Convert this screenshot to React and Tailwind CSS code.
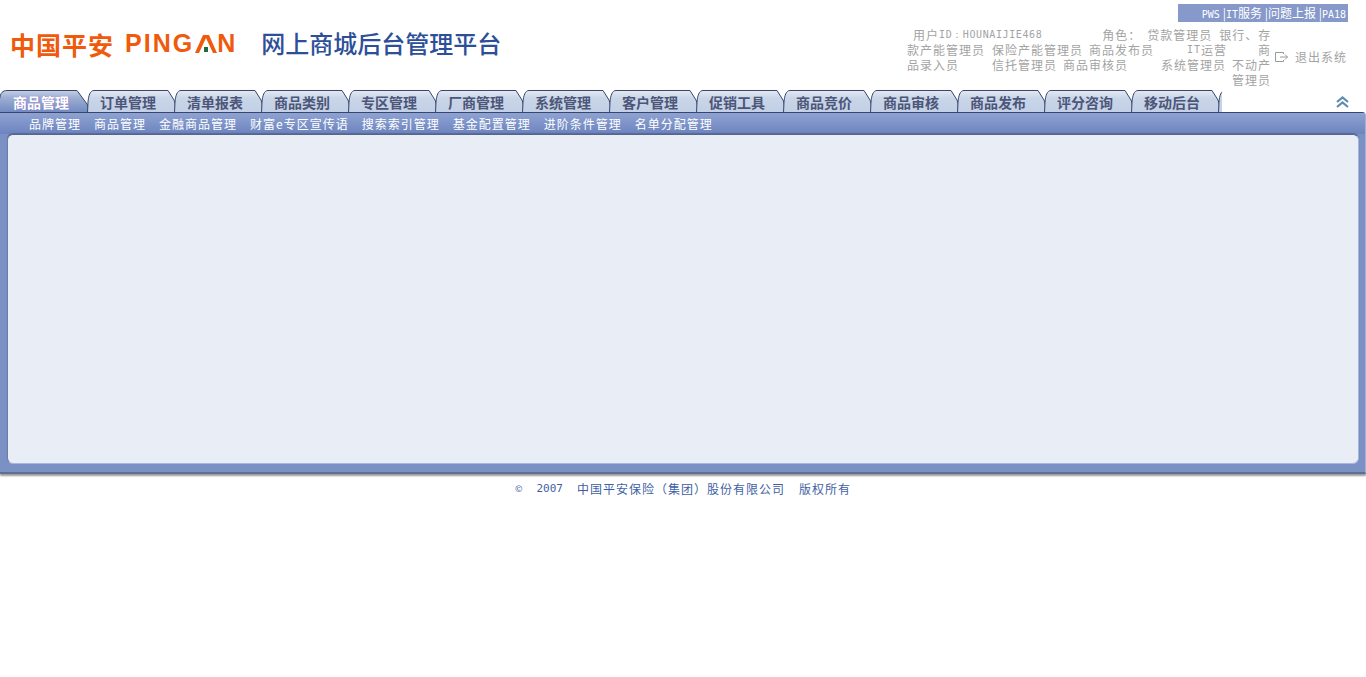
import React from "react";

const tabs = ["订单管理", "清单报表", "商品类别", "专区管理", "厂商管理", "系统管理", "客户管理", "促销工具", "商品竞价", "商品审核", "商品发布", "评分咨询", "移动后台"];
const subItems = ["品牌管理", "商品管理", "金融商品管理", "财富e专区宣传语", "搜索索引管理", "基金配置管理", "进阶条件管理", "名单分配管理"];

const cjk = "font-['Noto_Sans_CJK_SC','Liberation_Sans',sans-serif]";
const mono = "font-['DejaVu_Sans_Mono',monospace]";

// tab outline, drawn over a 90x22 box
const TabShape = () => (
  <svg className="absolute left-[-1px] top-0" width="91" height="23" viewBox="0 0 91 23">
    <defs>
      <linearGradient id="tabFill" x1="0" y1="0" x2="0" y2="1">
        <stop offset="0" stopColor="#e4e9f2" />
        <stop offset="0.35" stopColor="#c9d5e8" />
        <stop offset="1" stopColor="#c2cfe5" />
      </linearGradient>
    </defs>
    <path d="M1.5 23 L2 12 C2.5 6 4 .5 8 .5 L82 .5 L88 10 C89.5 13 89.5 18 89.5 23 Z" fill="url(#tabFill)" stroke="#33476f" strokeWidth="1" />
  </svg>
);

const Tab = ({ label }) => (
  <div className="relative w-[87px] h-[22px] shrink-0">
    <TabShape />
    <span className={`relative block pl-[13px] pt-[3px] text-[14px] leading-[19px] font-bold text-[#4c5678] ${cjk}`}>{label}</span>
  </div>
);

const ActiveTab = () => (
  <div className="relative w-[87px] h-[22px] shrink-0">
    <svg className="absolute left-0 top-0" width="90" height="23" viewBox="0 0 90 23">
      <defs>
        <linearGradient id="activeFill" x1="0" y1="0" x2="0" y2="1">
          <stop offset="0" stopColor="#c5cfe4" />
          <stop offset="0.3" stopColor="#a0b0d4" />
          <stop offset="1" stopColor="#6f88bf" />
        </linearGradient>
      </defs>
      <path d="M0 23 L0 8 C0 3 3 .5 7 .5 L77 .5 L87 14 C88 17 89 20 89 23 Z" fill="url(#activeFill)" />
      <path d="M0 8 C0 3 3 .5 7 .5 L77 .5 L87 14 C88 17 89 20 89 23" fill="none" stroke="#33476f" />
    </svg>
    <span className={`relative block pl-[13px] pt-[3px] text-[14px] leading-[19px] font-bold text-white ${cjk} [text-shadow:1px_0_0_#9a7fd0]`}>商品管理</span>
  </div>
);

const App = () => {
  return (
    <div className={`min-h-screen bg-white ${cjk}`}>
      {/* header */}
      <div className="h-[90px] flex">
        <div className="w-[907px] shrink-0 flex items-start pl-[10px] pt-[29px] whitespace-nowrap">
          <span className="text-[25px] leading-[30px] font-bold tracking-[1px] text-[#ef5a0d]">中国平安</span>
          <span className="ml-[11px] flex items-center h-[30px] font-['Liberation_Sans',sans-serif] text-[25px] font-bold text-[#ef5a0d] tracking-[2px]">
            PING
            <svg width="22" height="18" viewBox="0 0 22 18" className="ml-[1px]">
              <path d="M0 18 L8 0 L14 0 L22 18 L18 18 L11 3 L4 18 Z" fill="#ef5a0d" />
              <rect x="9" y="12" width="4" height="5" fill="#1c6b45" />
            </svg>
            N
          </span>
          <span className="ml-[24px] -mt-[1px] text-[24px] leading-[30px] font-medium text-[#2d4f98]">网上商城后台管理平台</span>
        </div>

        <div className="flex-1">
          <div className="ml-[271px] mt-[4px] w-[170px] h-[18px] bg-[#8699ca] text-white text-[12px] leading-[18px] text-right pr-[2px] whitespace-pre">
            <span className={`${mono} text-[10px] mr-[3px]`}>PWS</span>|<span className={`${mono} text-[10px]`}>IT</span>服务 |问题上报 |<span className={`${mono} text-[10px]`}>PA18</span>
          </div>
          <div className="flex">
            {/* user + roles */}
            <div className="w-[365px] mt-[5px] text-[12px] leading-[15px] tracking-[1px] text-[#a3a3a3] shrink-0 whitespace-nowrap">
              <div className="flex">
                <span className="ml-[6px]">用户</span>
                <span className={`${mono} text-[10px] tracking-[.6px]`}>ID：HOUNAIJIE468</span>
                <span className="ml-[60px]">角色：</span>
                <span className="ml-[6px]">贷款管理员</span>
                <span className="ml-[7px]">银行、存</span>
              </div>
              <div className="flex">
                <span>款产能管理员</span>
                <span className="ml-[7px]">保险产能管理员</span>
                <span className="ml-[6px]">商品发布员</span>
                <span className={`ml-[33px] ${mono} text-[10px]`}>IT</span>
                <span>运营</span>
                <span className="ml-[31px]">商</span>
              </div>
              <div className="flex">
                <span>品录入员</span>
                <span className="ml-[33px]">信托管理员</span>
                <span className="ml-[6px]">商品审核员</span>
                <span className="ml-[33px]">系统管理员</span>
                <span className="ml-[6px]">不动产</span>
              </div>
              <div className="pl-[325px]">管理员</div>
            </div>
            {/* logout */}
            <div className="ml-[3px] mt-[26px] flex items-center h-[18px] text-[12px] tracking-[1px] text-[#a3a3a3] whitespace-nowrap">
              <svg width="14" height="12" viewBox="0 0 14 12" fill="none" stroke="#9a9a9a" strokeWidth="1">
                <path d="M8.5 3 V1.5 H.5 V10.5 H8.5 V9" />
                <path d="M5 6 H12.5 M10 3.5 L12.5 6 L10 8.5" />
              </svg>
              <span className="ml-[6px]">退出系统</span>
            </div>
          </div>
        </div>
      </div>

      {/* tabs */}
      <div className="relative z-10 h-[22px] flex justify-between">
        <div className="w-[1222px] flex overflow-hidden h-[22px]">
          <ActiveTab />
          {tabs.map((t) => (
            <Tab key={t} label={t} />
          ))}
          <div className="relative w-[10px] h-[22px] shrink-0">
            <TabShape />
          </div>
        </div>
        <svg className="mr-[17px] mt-[6px]" width="13" height="12" viewBox="0 0 13 12" fill="none" stroke="#5f8bb1" strokeWidth="2.2">
          <path d="M1 6 L6.5 1.5 L12 6" />
          <path d="M1 11 L6.5 6.5 L12 11" />
        </svg>
      </div>

      {/* main panel */}
      <div className="h-[362px] rounded-tr-[4px] border-t border-t-[#33476f] border-b-2 border-b-[#5f6f8f] border-r border-r-[#a3b2d6] bg-[#7b91c6] flex flex-col shadow-[0_2px_2px_#9a9a9a]">
        <div className="h-[21px] shrink-0 bg-gradient-to-b from-[#8fa2d2] to-[#6c84bf] flex items-center pl-[29px] gap-[13px] text-white text-[12px] tracking-[1px] whitespace-nowrap">
          {subItems.map((s) => (
            <span key={s}>{s}</span>
          ))}
        </div>
        <div className="ml-[7px] mr-[6px] flex-1 mb-[8px] rounded-[6px] border border-[#a9b6d8] border-t-[#55658c] border-l-[#6b7da8] bg-[#e9edf6] shadow-[0_-1px_1px_#5a6a95]" />
      </div>

      {/* footer */}
      <div className="mt-[6px] flex justify-center items-center h-[18px] text-[12px] tracking-[1px] text-[#3f5fa3] whitespace-pre">
        <span className="text-[9px]">©</span>
        <span className={`ml-[13px] ${mono} text-[11px] tracking-normal`}>2007</span>
        <span className="ml-[14px]">中国平安保险（集团）股份有限公司</span>
        <span className="ml-[14px]">版权所有</span>
      </div>
    </div>
  );
};

export default App;
